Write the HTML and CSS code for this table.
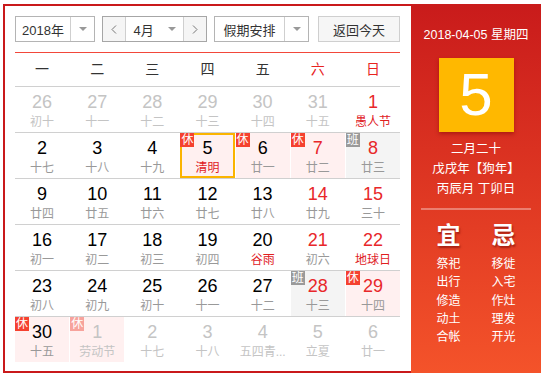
FILE: index.html
```html
<!DOCTYPE html>
<html lang="zh-CN">
<head>
<meta charset="utf-8">
<title>万年历</title>
<link rel="stylesheet" href="styles.css">
</head>
<body>
<div class="calendar">
  <div class="main">
    <div class="toolbar">
      <div class="select year">
        <span class="sel-text">2018年</span>
        <span class="sel-arrow"><svg width="8" height="4" viewBox="0 0 8 4"><path d="M0 0H8L4 4Z" fill="#999"/></svg></span>
      </div>
      <div class="select month">
        <span class="nav-btn"><svg width="6" height="9" viewBox="0 0 6 9"><path d="M5 0.5L1 4.5L5 8.5" fill="none" stroke="#777" stroke-width="1"/></svg></span>
        <span class="sel-text month-text">4月</span>
        <span class="sel-arrow month-arrow"><svg width="8" height="4" viewBox="0 0 8 4"><path d="M0 0H8L4 4Z" fill="#999"/></svg></span>
        <span class="nav-btn next"><svg width="6" height="9" viewBox="0 0 6 9"><path d="M1 0.5L5 4.5L1 8.5" fill="none" stroke="#777" stroke-width="1"/></svg></span>
      </div>
      <div class="select holiday">
        <span class="sel-text">假期安排</span>
        <span class="sel-arrow"><svg width="8" height="4" viewBox="0 0 8 4"><path d="M0 0H8L4 4Z" fill="#999"/></svg></span>
      </div>
      <div class="today-btn">返回今天</div>
    </div>

    <div class="week">
      <span>一</span><span>二</span><span>三</span><span>四</span><span>五</span><span class="red">六</span><span class="red">日</span>
    </div>

    <div class="row">
      <div class="cell other"><div class="num">26</div><div class="lunar">初十</div></div>
      <div class="cell other"><div class="num">27</div><div class="lunar">十一</div></div>
      <div class="cell other"><div class="num">28</div><div class="lunar">十二</div></div>
      <div class="cell other"><div class="num">29</div><div class="lunar">十三</div></div>
      <div class="cell other"><div class="num">30</div><div class="lunar">十四</div></div>
      <div class="cell other"><div class="num">31</div><div class="lunar">十五</div></div>
      <div class="cell weekend"><div class="num">1</div><div class="lunar fest">愚人节</div></div>
    </div>
    <div class="row">
      <div class="cell"><div class="num">2</div><div class="lunar">十七</div></div>
      <div class="cell"><div class="num">3</div><div class="lunar">十八</div></div>
      <div class="cell"><div class="num">4</div><div class="lunar">十九</div></div>
      <div class="cell rest selected"><span class="badge">休</span><div class="num">5</div><div class="lunar fest">清明</div></div>
      <div class="cell rest"><span class="badge">休</span><div class="num">6</div><div class="lunar">廿一</div></div>
      <div class="cell rest weekend"><span class="badge">休</span><div class="num">7</div><div class="lunar">廿二</div></div>
      <div class="cell work weekend"><span class="badge">班</span><div class="num">8</div><div class="lunar">廿三</div></div>
    </div>
    <div class="row">
      <div class="cell"><div class="num">9</div><div class="lunar">廿四</div></div>
      <div class="cell"><div class="num">10</div><div class="lunar">廿五</div></div>
      <div class="cell"><div class="num">11</div><div class="lunar">廿六</div></div>
      <div class="cell"><div class="num">12</div><div class="lunar">廿七</div></div>
      <div class="cell"><div class="num">13</div><div class="lunar">廿八</div></div>
      <div class="cell weekend"><div class="num">14</div><div class="lunar">廿九</div></div>
      <div class="cell weekend"><div class="num">15</div><div class="lunar">三十</div></div>
    </div>
    <div class="row">
      <div class="cell"><div class="num">16</div><div class="lunar">初一</div></div>
      <div class="cell"><div class="num">17</div><div class="lunar">初二</div></div>
      <div class="cell"><div class="num">18</div><div class="lunar">初三</div></div>
      <div class="cell"><div class="num">19</div><div class="lunar">初四</div></div>
      <div class="cell"><div class="num">20</div><div class="lunar fest">谷雨</div></div>
      <div class="cell weekend"><div class="num">21</div><div class="lunar">初六</div></div>
      <div class="cell weekend"><div class="num">22</div><div class="lunar fest">地球日</div></div>
    </div>
    <div class="row">
      <div class="cell"><div class="num">23</div><div class="lunar">初八</div></div>
      <div class="cell"><div class="num">24</div><div class="lunar">初九</div></div>
      <div class="cell"><div class="num">25</div><div class="lunar">初十</div></div>
      <div class="cell"><div class="num">26</div><div class="lunar">十一</div></div>
      <div class="cell"><div class="num">27</div><div class="lunar">十二</div></div>
      <div class="cell work weekend"><span class="badge">班</span><div class="num">28</div><div class="lunar">十三</div></div>
      <div class="cell rest weekend"><span class="badge">休</span><div class="num">29</div><div class="lunar">十四</div></div>
    </div>
    <div class="row last">
      <div class="cell rest"><span class="badge">休</span><div class="num">30</div><div class="lunar">十五</div></div>
      <div class="cell rest other"><span class="badge">休</span><div class="num">1</div><div class="lunar">劳动节</div></div>
      <div class="cell other"><div class="num">2</div><div class="lunar">十七</div></div>
      <div class="cell other"><div class="num">3</div><div class="lunar">十八</div></div>
      <div class="cell other"><div class="num">4</div><div class="lunar">五四青...</div></div>
      <div class="cell other"><div class="num">5</div><div class="lunar">立夏</div></div>
      <div class="cell other"><div class="num">6</div><div class="lunar">廿一</div></div>
    </div>
  </div>

  <div class="side">
    <div class="side-date">2018-04-05 星期四</div>
    <div class="bigday">5</div>
    <div class="side-lunar">
      <div>二月二十</div>
      <div>戊戌年【狗年】</div>
      <div>丙辰月 丁卯日</div>
    </div>
    <div class="side-divider"></div>
    <div class="yiji">
      <div class="yiji-col">
        <div class="yiji-title">宜</div>
        <ul class="yiji-list">
          <li>祭祀</li><li>出行</li><li>修造</li><li>动土</li><li>合帐</li>
        </ul>
      </div>
      <div class="yiji-col">
        <div class="yiji-title">忌</div>
        <ul class="yiji-list">
          <li>移徙</li><li>入宅</li><li>作灶</li><li>理发</li><li>开光</li>
        </ul>
      </div>
    </div>
  </div>
</div>
</body>
</html>
```
FILE: styles.css
```css
body {
  margin: 0;
  background: #fff;
  font-family: "Liberation Sans", "Noto Sans CJK SC", sans-serif;
  color: #333;
}

.calendar {
  display: flex;
  margin: 4px 0 0 3px;
  width: 538px;
  height: 369px;
}

.main {
  width: 408px;
  box-sizing: border-box;
  border: 2px solid #c9191b;
  border-right: none;
  padding: 10px 11px 0 10px;
}

/* toolbar */
.toolbar {
  display: flex;
  height: 26px;
  gap: 7px;
  margin-bottom: 10px;
  font-size: 13px;
}

.select {
  display: flex;
  box-sizing: border-box;
  height: 26px;
  border: 1px solid #b4b4b4;
  background: #fff;
}

.sel-text {
  display: flex;
  align-items: center;
  justify-content: center;
  color: #333;
}

.sel-arrow {
  display: flex;
  align-items: center;
  justify-content: center;
  border-left: 1px solid #cfcfcf;
}

.year { width: 80px; }
.year .sel-text { width: 54px; }
.year .sel-arrow { flex: 1; }

.month { width: 105px; border-color: #a6a6a6; }
.nav-btn {
  width: 22px;
  display: flex;
  align-items: center;
  justify-content: center;
  background: #f5f5f5;
  border-right: 1px solid #cfcfcf;
}
.nav-btn.next {
  border-right: none;
  border-left: 1px solid #cfcfcf;
}
.month-text {
  width: 36px;
}
.month-arrow {
  border-left: none;
  width: 22px;
}

.holiday { width: 95px; }
.holiday .sel-text { width: 69px; }
.holiday .sel-arrow { flex: 1; }

.today-btn {
  margin-left: auto;
  width: 82px;
  height: 26px;
  box-sizing: border-box;
  border: 1px solid #cfcfcf;
  background: #f6f6f6;
  display: flex;
  align-items: center;
  justify-content: center;
  color: #333;
}

/* week header */
.week {
  display: grid;
  grid-template-columns: repeat(7, 1fr);
  column-gap: 1px;
  border-top: 1px solid #f2473a;
  border-bottom: 1px solid #d0d0d0;
  height: 33px;
  line-height: 33px;
  text-align: center;
  font-size: 14px;
  color: #333;
}
.week .red { color: #e8241f; }

/* rows */
.row {
  display: grid;
  grid-template-columns: repeat(7, 1fr);
  column-gap: 1px;
  height: 45px;
  border-bottom: 1px solid #d0d0d0;
}
.row.last { border-bottom: none; }

.cell {
  position: relative;
  text-align: center;
  padding-top: 4px;
  box-sizing: border-box;
}

.num {
  font-size: 18px;
  line-height: 22px;
  color: #000;
}

.lunar {
  font-size: 12px;
  line-height: 18px;
  color: #999;
  white-space: nowrap;
}

.weekend .num { color: #e8272a; }
.lunar.fest { color: #e0201f; }

.other .num { color: #c4c4c4; }
.other .lunar { color: #c4c4c4; }

.rest { background: #fff0f0; }
.work { background: #f4f4f4; }

.badge {
  position: absolute;
  top: 0;
  left: 0;
  width: 14px;
  height: 14px;
  line-height: 14px;
  font-size: 12px;
  color: #fff;
  text-align: center;
  background: #f5412f;
}
.work .badge { background: #9a9a9a; }
.other .badge { background: #f7a39c; }

.selected {
  box-shadow: inset 0 0 0 2px #fbb400;
}

/* side panel */
.side {
  width: 130px;
  height: 369px;
  box-sizing: border-box;
  padding-top: 24px;
  background: linear-gradient(180deg, #c91b1b 0%, #f4532a 100%);
  color: #fff;
  text-align: center;
}

.side-date {
  font-size: 12.5px;
  line-height: 14px;
}

.bigday {
  width: 75px;
  height: 74px;
  margin: 16px auto 0;
  background: #ffb800;
  font-size: 60px;
  line-height: 74px;
  color: #fff;
  box-shadow: 0 2px 4px rgba(120, 0, 0, 0.45);
}

.side-lunar {
  margin-top: 7px;
  font-size: 12.5px;
  line-height: 20px;
}

.side-divider {
  margin: 9px 10px 0;
  height: 2px;
  background: rgba(255, 255, 255, 0.35);
}

.yiji {
  display: flex;
  justify-content: center;
  gap: 5px;
  margin-top: 11px;
}

.yiji-col { width: 50px; }

.yiji-title {
  font-size: 24px;
  line-height: 30px;
  font-weight: bold;
  text-shadow: 1px 2px 2px rgba(100, 0, 0, 0.5);
}

.yiji-list {
  list-style: none;
  margin: 4px 0 0;
  padding: 0;
  font-size: 12px;
  line-height: 18.3px;
}
```
